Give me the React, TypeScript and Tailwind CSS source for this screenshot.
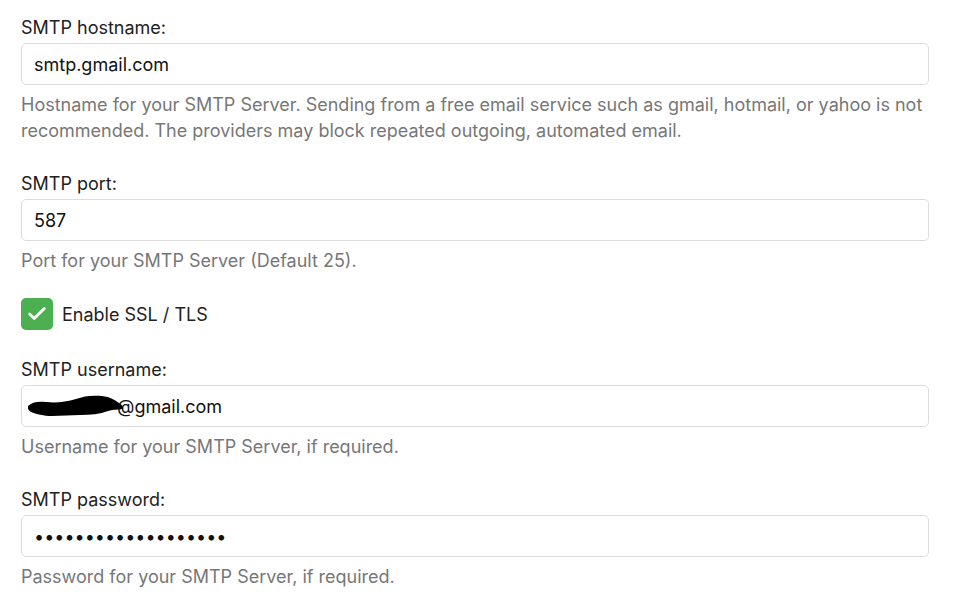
import { Check } from "lucide-react";

interface FieldProps {
  label: string;
  help: React.ReactNode;
  children: React.ReactNode;
}

function Field({ label, help, children }: FieldProps) {
  return (
    <div className="flex flex-col">
      <label className="text-[18px] leading-6 text-[#222]">{label}</label>
      <div className="mt-[3px] flex h-[42px] items-center rounded-[5px] border border-[#dcdcdc] bg-white px-3 text-[18px] text-[#111]">
        {children}
      </div>
      <p className="mt-[7px] text-[18px] leading-[26px] text-[#777]">{help}</p>
    </div>
  );
}

// redaction blot over the username
function Scribble() {
  return (
    <svg width="96" height="24" viewBox="0 0 96 24" className="-ml-[6px] -mr-[7px] mt-[1px]">
      <path
        d="M0 11 C4 7 10 6 18 7 C28 8 38 7 48 4 C56 1 64 0 74 1 C82 2 87 5 91 8 C94 10 96 12 95 14 C90 15 86 14 80 16 C72 19 62 20 52 20 C42 20 34 21 24 21 C16 21 8 19 3 17 C0 15 -1 13 0 11 Z"
        fill="#000"
      />
    </svg>
  );
}

export default function App() {
  return (
    <div className="min-h-screen bg-white font-['Inter',sans-serif]">
      <div className="flex w-[929px] flex-col pl-[21px] pt-4">
        <Field
          label="SMTP hostname:"
          help="Hostname for your SMTP Server. Sending from a free email service such as gmail, hotmail, or yahoo is not recommended. The providers may block repeated outgoing, automated email."
        >
          smtp.gmail.com
        </Field>

        <div className="mt-[28px]">
          <Field label="SMTP port:" help="Port for your SMTP Server (Default 25).">
            587
          </Field>
        </div>

        <div className="mt-6 flex items-center gap-[9px]">
          <span className="flex h-8 w-8 items-center justify-center rounded-[5px] bg-[#4caf50]">
            <Check className="h-[22px] w-[22px] text-white" strokeWidth={3} />
          </span>
          <span className="text-[18px] text-[#222]">Enable SSL / TLS</span>
        </div>

        <div className="mt-7">
          <Field label="SMTP username:" help="Username for your SMTP Server, if required.">
            <Scribble />
            <span>@gmail.com</span>
          </Field>
        </div>

        <div className="mt-[28px]">
          <Field label="SMTP password:" help="Password for your SMTP Server, if required.">
            <span>•••••••••••••••••••</span>
          </Field>
        </div>
      </div>
    </div>
  );
}
